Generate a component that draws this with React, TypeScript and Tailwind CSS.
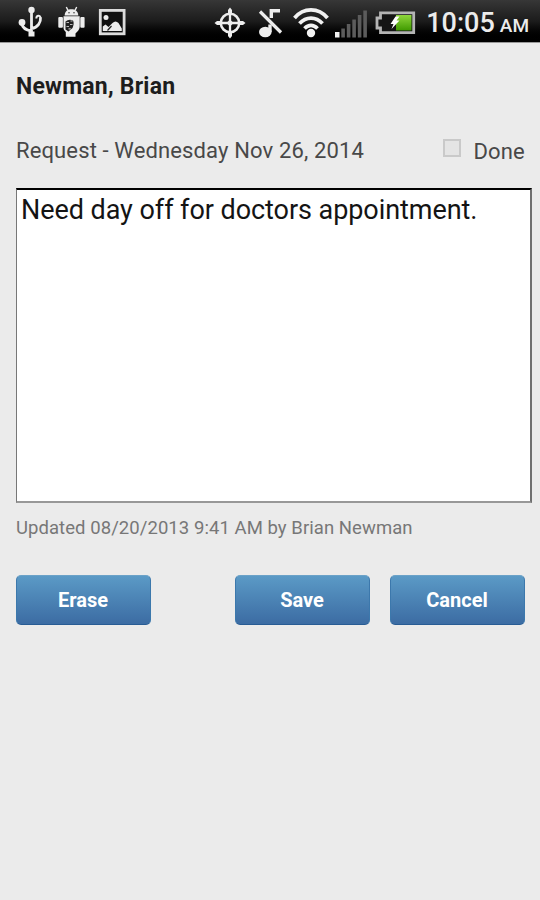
import { useState } from 'react';
import type { ReactNode } from 'react';

function UsbIcon() {
  return (
    <svg width="28" height="42" viewBox="17 0 28 42" fill="none" stroke="#ededed" strokeWidth="2.8">
      <path d="M31.5 10V34M22 24C22.5 28.500 26 30 31.500 31M31.500 28.500C38 27.500 41 22 40.500 17.500" />
      <circle cx="31.500" cy="10" r="3.200" fill="#ededed" stroke="none" />
      <circle cx="22" cy="22.500" r="3.400" fill="#ededed" stroke="none" />
      <path d="M40.500 18C40 15 36.500 15 36.300 18.500" strokeWidth="2" />
      <rect x="28.500" y="31.500" width="6" height="5" fill="#ededed" stroke="none" />
    </svg>
  );
}

function AndroidIcon() {
  return (
    <svg width="29" height="42" viewBox="57 0 29 42" fill="#ededed">
      <path d="M66.300 7L68 10.400M76.700 7L75 10.400" stroke="#ededed" strokeWidth="1.400" />
      <path d="M64.600 15.500C65 10.800 68 9.300 71.400 9.300S78 10.800 78.300 15.500Z" />
      <rect x="58.300" y="17" width="4.600" height="10.800" rx="1" />
      <rect x="80.300" y="17" width="4.300" height="10.800" rx="1" />
      <path d="M63.500 16.300H79.700V26C79.700 30 77.500 31.500 75.500 33.500V36.700H65.800V32C64 30.500 63.500 29 63.500 27Z" />
      <path d="M65.500 21.500Q69 18.500 73 20.500Q74.500 23.500 72.500 28L68.500 31.500L65.500 29.500Z" fill="#202020" />
      <path d="M66.500 22.500H69M70.500 21H72.500M70 24.500H72.500M66.500 26.500H69M68.500 28.800H70.800" stroke="#bbb" strokeWidth="1.200" />
      <circle cx="69" cy="12.700" r=".7" fill="#222" />
      <circle cx="74" cy="12.700" r=".7" fill="#222" />
    </svg>
  );
}

function PictureIcon() {
  return (
    <svg width="29" height="42" viewBox="98 0 29 42" fill="#ededed">
      <rect x="100.300" y="10.400" width="23.800" height="23.400" fill="#111" stroke="#dcdcdc" strokeWidth="2.800" />
      <circle cx="106" cy="17.500" r="2.500" />
      <path d="M102.800 31V26.500L105.500 24.500L108.500 27L112.500 23Q115.500 20 118.500 23L121.800 28.500V31Z" />
      <path d="M107.500 30.500L111.500 26" stroke="#222" strokeWidth="1.200" />
    </svg>
  );
}

function LocationIcon() {
  return (
    <svg width="32" height="42" viewBox="214 0 32 42" fill="none" stroke="#ededed">
      <circle cx="230" cy="23" r="9.200" strokeWidth="2.500" />
      <path d="M230 12V34M219 23H241" strokeWidth="2.300" />
      <path
        d="M230 7.500L232 10V14H228V10ZM230 38.500L232 36V32H228V36ZM214.500 23L217 21H221V25H217ZM245.500 23L243 21H239V25H243Z"
        fill="#ededed"
        stroke="none"
      />
      <path d="M230 19.500L233.500 23L230 26.500L226.500 23Z" fill="#ededed" stroke="none" />
    </svg>
  );
}

function MutedNoteIcon() {
  return (
    <svg width="26" height="42" viewBox="258 0 26 42" fill="none" stroke="#ededed">
      <ellipse cx="265.300" cy="32" rx="6.300" ry="5.200" fill="#ededed" stroke="none" />
      <path d="M270 32V24.500M271.300 18V10.800H280" strokeWidth="3.400" />
      <path d="M260 11.500L281 32.500" strokeWidth="3.200" />
    </svg>
  );
}

function WifiIcon() {
  return (
    <svg width="36" height="42" viewBox="293 0 36 42" fill="none" stroke="#f2f2f2" strokeWidth="3.700">
      <path d="M294.500 18C303.500 7.200 318.500 7.200 327.500 18" />
      <path d="M299.500 23.500C306 16.200 316 16.200 322.500 23.500" />
      <path d="M304.500 28.500C308.500 24.300 313.500 24.300 317.500 28.500" />
      <circle cx="311" cy="33" r="4.200" fill="#f2f2f2" stroke="none" />
    </svg>
  );
}

function SignalIcon() {
  return (
    <svg width="35" height="42" viewBox="334 0 35 42" fill="#5c5c5c">
      <rect x="335" y="32" width="4.500" height="5.500" fill="#f2f2f2" />
      <rect x="341.300" y="28.500" width="3.600" height="9" />
      <rect x="346.800" y="24" width="3.600" height="13.500" />
      <rect x="352.300" y="19.500" width="3.600" height="18" />
      <rect x="357.800" y="15" width="3.600" height="22.500" />
      <rect x="363.300" y="10.500" width="3.600" height="27" />
    </svg>
  );
}

function BatteryIcon() {
  return (
    <svg width="41" height="42" viewBox="375 0 41 42">
      <defs>
        <linearGradient id="charge" x1="0" y1="0" x2="0" y2="1">
          <stop offset="0" stopColor="#8fd63c" />
          <stop offset="1" stopColor="#3f9a00" />
        </linearGradient>
      </defs>
      <path d="M380.500 12.800H413.700V32.700H380.500V28H377V18H380.500Z" fill="#151515" stroke="#b4b4b4" strokeWidth="2.800" />
      <rect x="396" y="15" width="15.500" height="15.500" fill="url(#charge)" />
      <path d="M395.500 16.500H399.500L396.500 20.500H399.500L391.500 29L393.500 24H390.500Z" fill="#fff" />
    </svg>
  );
}

function StatusBar() {
  return (
    <header className="flex h-[42px] items-center bg-linear-to-b from-[#373737] via-[#1c1c1c] to-black pr-[11px] pl-[17px] text-[#ececec]">
      <div className="flex gap-3">
        <UsbIcon />
        <AndroidIcon />
        <PictureIcon />
      </div>
      <div className="ml-[87px] flex gap-3">
        <LocationIcon />
        <MutedNoteIcon />
      </div>
      <div className="ml-[9px] flex gap-[5px]">
        <WifiIcon />
        <SignalIcon />
      </div>
      <div className="ml-1.5">
        <BatteryIcon />
      </div>
      <div className="ml-auto flex items-baseline gap-[5px] pt-1.5 font-medium whitespace-nowrap">
        <span className="text-[27px] leading-8">10:05</span>
        <span className="text-[19px] leading-8">AM</span>
      </div>
    </header>
  );
}

function ActionButton({ children, onClick }: { children: ReactNode; onClick?: () => void }) {
  return (
    <button
      onClick={onClick}
      className="h-[50px] w-[135px] rounded-[5px] border border-[#3c78ac] border-t-[#6ba2c8] border-b-[#285c94] bg-linear-to-b from-[#5b9ac6] to-[#3c6ca3] pr-px text-[20px] font-bold text-white"
    >
      {children}
    </button>
  );
}

export default function App() {
  const [note, setNote] = useState('Need day off for doctors appointment.');
  const [done, setDone] = useState(false);

  return (
    <div className="h-[900px] w-[540px] overflow-hidden bg-[#ebebeb] font-[Roboto,sans-serif]">
      <StatusBar />
      <main className="border-t border-[#999] pr-[15px] pl-4">
        <h1 className="pt-7 text-[23px] leading-8 font-bold tracking-[0.22px] text-[#1d1d1d]">
          Newman, Brian
        </h1>
        <div className="mt-8 flex h-8 items-center justify-between text-[22px] leading-8 text-[#484848]">
          <span className="tracking-[0.13px]">Request - Wednesday Nov 26, 2014</span>
          <label className="flex items-center gap-3">
            <input
              type="checkbox"
              checked={done}
              onChange={(e) => setDone(e.target.checked)}
              className="mb-[7px] size-[18px] appearance-none border-2 border-[#c9c9c9] bg-[#e4e4e4] checked:bg-[#4a86b8]"
            />
            <span className="pt-0.5 tracking-[0.2px]">Done</span>
          </label>
        </div>
        <textarea
          value={note}
          onChange={(e) => setNote(e.target.value)}
          className="mt-[21px] block h-[315px] w-[516px] resize-none border-t-2 border-r-2 border-b-2 border-l border-t-black border-r-[#707070] border-b-[#989898] border-l-[#777] bg-white px-1 py-1 text-[27px] leading-8 tracking-[-0.06px] text-[#141414] outline-none"
        />
        <p className="mt-[13px] text-[18.5px] leading-6 tracking-[0.06px] text-[#777]">
          Updated 08/20/2013 9:41 AM by Brian Newman
        </p>
        <div className="mt-[35px] flex justify-between">
          <ActionButton onClick={() => setNote('')}>Erase</ActionButton>
          <div className="flex gap-5">
            <ActionButton>Save</ActionButton>
            <ActionButton>Cancel</ActionButton>
          </div>
        </div>
      </main>
    </div>
  );
}
